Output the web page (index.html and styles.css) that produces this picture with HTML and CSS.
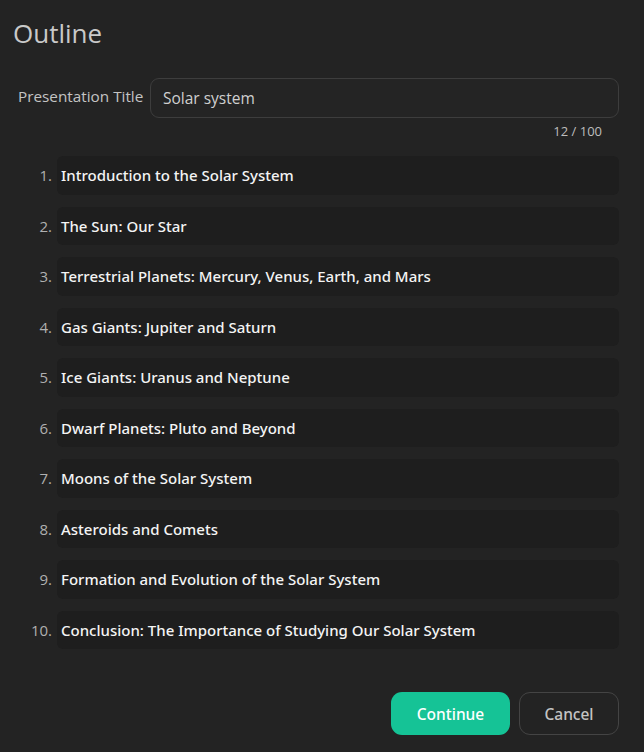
FILE: index.html
```html
<!DOCTYPE html>
<html lang="en">
<head>
    <meta charset="UTF-8">
    <meta name="viewport" content="width=device-width, initial-scale=1.0">
    <title>Outline</title>
    <link rel="stylesheet" href="styles.css">
</head>
<body>
    <div class="dialog">
        <h1>Outline</h1>

        <div class="field">
            <label for="title">Presentation Title</label>
            <input id="title" type="text" value="Solar system">
        </div>
        <div class="counter">12 / 100</div>

        <ol class="outline">
            <li><span class="num">1.</span><div class="item">Introduction to the Solar System</div></li>
            <li><span class="num">2.</span><div class="item">The Sun: Our Star</div></li>
            <li><span class="num">3.</span><div class="item">Terrestrial Planets: Mercury, Venus, Earth, and Mars</div></li>
            <li><span class="num">4.</span><div class="item">Gas Giants: Jupiter and Saturn</div></li>
            <li><span class="num">5.</span><div class="item">Ice Giants: Uranus and Neptune</div></li>
            <li><span class="num">6.</span><div class="item">Dwarf Planets: Pluto and Beyond</div></li>
            <li><span class="num">7.</span><div class="item">Moons of the Solar System</div></li>
            <li><span class="num">8.</span><div class="item">Asteroids and Comets</div></li>
            <li><span class="num">9.</span><div class="item">Formation and Evolution of the Solar System</div></li>
            <li><span class="num">10.</span><div class="item">Conclusion: The Importance of Studying Our Solar System</div></li>
        </ol>

        <div class="actions">
            <button class="btn btn-primary">Continue</button>
            <button class="btn btn-ghost">Cancel</button>
        </div>
    </div>
</body>
</html>
```

FILE: styles.css
```css
* {
    box-sizing: border-box;
}

body {
    margin: 0;
    background: #232323;
    font-family: 'Open Sans', 'Noto Sans', sans-serif;
    color: #e6e6e6;
}

.dialog {
    padding: 16px 25px 17px 13px;
}

h1 {
    margin: 0;
    font-size: 26px;
    font-weight: 400;
    line-height: 34px;
    color: #c9c9c9;
}

.field {
    display: flex;
    align-items: center;
    margin-top: 28px;
    padding-left: 5px;
}

.field label {
    width: 132px;
    font-size: 15.3px;
    color: #c4c4c4;
    margin-top: -5px;
    white-space: nowrap;
}

.field input {
    flex: 1;
    height: 40px;
    background: #242424;
    border: 1px solid #3d3d3d;
    border-radius: 9px;
    padding: 0 12px;
    font-family: inherit;
    font-size: 15.5px;
    color: #d0d0d0;
    outline: none;
}

.counter {
    text-align: right;
    font-size: 13px;
    color: #bdbdbd;
    padding-right: 17px;
    margin-top: 4px;
    line-height: 19px;
}

.outline {
    list-style: none;
    margin: 15px 0 0;
    padding: 0;
    display: flex;
    flex-direction: column;
    gap: 12px;
}

.outline li {
    display: flex;
    align-items: center;
}

.num {
    width: 44px;
    text-align: right;
    padding-right: 5px;
    font-size: 15px;
    color: #b0b0b0;
}

.item {
    flex: 1;
    height: 38.5px;
    display: flex;
    align-items: center;
    padding-left: 4px;
    background: #1e1e1e;
    border-radius: 6px;
    font-family: 'Noto Sans', 'Open Sans', sans-serif;
    font-size: 15px;
    font-weight: 500;
    color: #f4f4f4;
}

.actions {
    display: flex;
    justify-content: flex-end;
    gap: 9px;
    margin-top: 43px;
}

.btn {
    height: 43px;
    border-radius: 11px;
    font-family: 'Noto Sans', 'Open Sans', sans-serif;
    font-size: 15.5px;
    font-weight: 500;
    cursor: pointer;
}

.btn-primary {
    width: 119px;
    background: #15c396;
    border: none;
    color: #ffffff;
}

.btn-ghost {
    width: 100px;
    background: transparent;
    border: 1px solid #444444;
    color: #c4c4c4;
}
```
